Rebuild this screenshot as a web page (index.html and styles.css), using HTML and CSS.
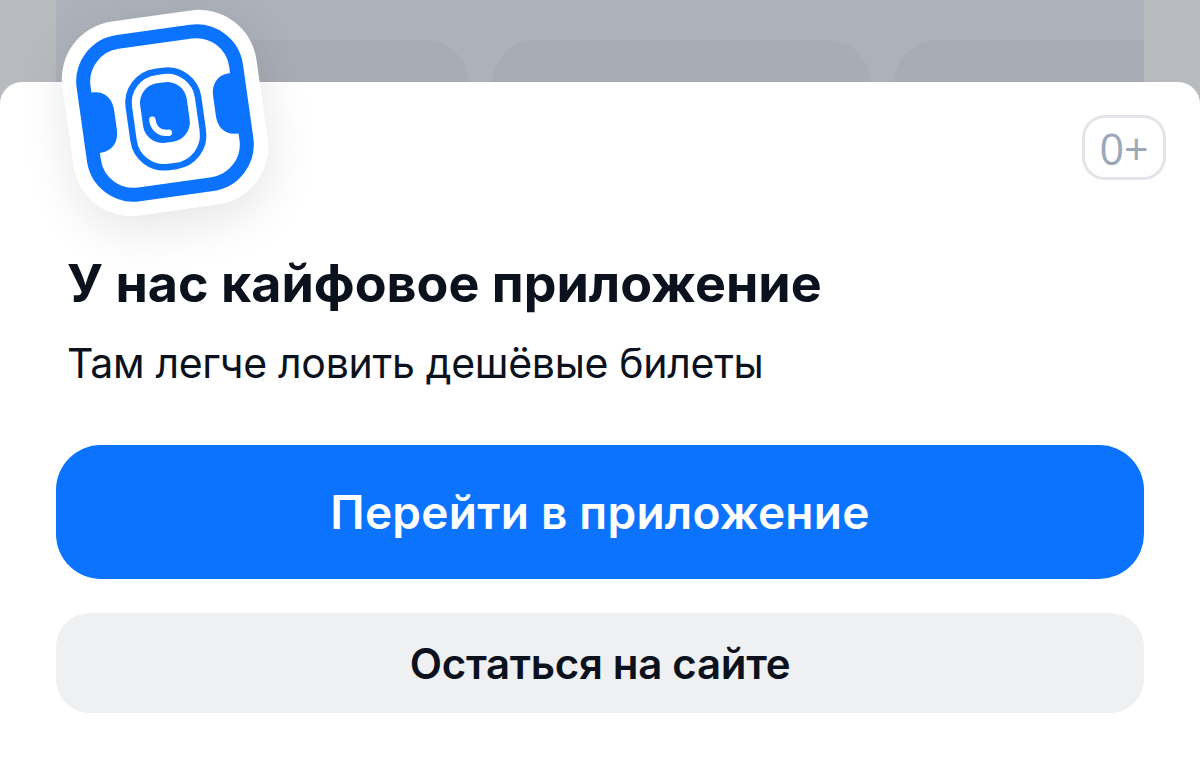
FILE: index.html
```
<!DOCTYPE html>
<html lang="ru">
<head>
  <meta charset="UTF-8" />
  <meta name="viewport" content="width=device-width, initial-scale=1.0"/>
  <title>Приложение</title>
  <link rel="stylesheet" href="styles.css">
</head>
<body>

  <!-- Dimmed page -->
  <div class="page">
    <div class="card"></div>
    <div class="card"></div>
    <div class="card"></div>
  </div>

  <!-- Bottom sheet -->
  <div class="sheet">
    <div class="app-icon">
      <svg viewBox="-98 -98 196 196">
        <rect x="-77" y="-77" width="154" height="154" rx="40" fill="none" stroke="#0c73fe" stroke-width="14"/>
        <path d="M-72 -30.5H-69C-57 -30.5 -50 -22 -50 -10V10C-50 22 -57 30.5 -69 30.5H-72Z" fill="#0c73fe"/>
        <path d="M72 -30.5H69C57 -30.5 50 -22 50 -10V10C50 22 57 30.5 69 30.5H72Z" fill="#0c73fe"/>
        <rect x="-35" y="-42" width="70" height="96" rx="31" fill="none" stroke="#0c73fe" stroke-width="6.5"/>
        <rect x="-23.5" y="-30.5" width="47" height="60" rx="19.5" fill="#0c73fe"/>
        <path d="M-13.500 5C-13.500 14 -8 20 1 20" fill="none" stroke="#fff" stroke-width="6.500" stroke-linecap="round"/>
      </svg>
    </div>
    <span class="age">0+</span>

    <h1>У нас кайфовое приложение</h1>
    <p>Там легче ловить дешёвые билеты</p>

    <div class="buttons">
      <button class="btn btn-primary">Перейти в приложение</button>
      <button class="btn btn-secondary">Остаться на сайте</button>
    </div>
  </div>

</body>
</html>
```
FILE: styles.css
```
* {
  box-sizing: border-box;
}

body {
  font-family: Inter, 'Liberation Sans', sans-serif;
  margin: 0;
  height: 769px;
  overflow: hidden;
  background: #b7bbbf;
  color: #0b121d;
}

.page {
  display: flex;
  gap: 23px;
  height: 150px;
  margin: 0 56px;
  padding-top: 40px;
  background: #adb1ba;
  overflow: hidden;
}

.card {
  flex: 0 0 379px;
  height: 200px;
  border-radius: 44px;
  background: #a8acb4;
}

.card:first-child {
  margin-left: 34px;
}

.sheet {
  position: relative;
  height: 687px;
  margin-top: -68px;
  padding: 172px 56px 0;
  background: #fff;
  border-radius: 22px 22px 0 0;
}

/* sticks out over the top edge of the sheet */
.app-icon {
  position: absolute;
  top: -67.5px;
  left: 66.5px;
  width: 196px;
  height: 196px;
  background: #fff;
  border-radius: 58px;
  box-shadow: 0 14px 50px rgba(0, 0, 0, 0.1);
  transform: rotate(-8deg);
}

.app-icon svg {
  display: block;
  width: 100%;
  height: 100%;
}

.age {
  position: absolute;
  top: 33px;
  right: 34px;
  width: 84px;
  height: 65px;
  border: 3px solid #e2e4e9;
  border-radius: 23px;
  color: #9ba8b8;
  font-family: 'Open Sans', sans-serif;
  font-size: 43px;
  font-weight: 400;
  line-height: 61px;
  text-align: center;
}

h1 {
  margin: 0 0 0 11px;
  font-size: 52px;
  font-weight: 700;
  line-height: 60px;
  white-space: nowrap;
}

p {
  margin: 24px 0 0 11px;
  font-size: 41px;
  line-height: 50px;
  letter-spacing: -0.3px;
  white-space: nowrap;
}

.buttons {
  display: flex;
  flex-direction: column;
  gap: 34px;
  margin-top: 57px;
}

.btn {
  padding: 0;
  border: none;
  font-family: inherit;
  font-weight: 600;
  cursor: pointer;
}

.btn-primary {
  height: 134px;
  border-radius: 45px;
  background: #0c73fe;
  color: #fff;
  font-size: 46px;
  letter-spacing: 0.25px;
}

.btn-secondary {
  height: 100px;
  border-radius: 34px;
  background: #eff0f2;
  color: #0b121d;
  font-size: 42px;
  letter-spacing: -0.3px;
}
```
